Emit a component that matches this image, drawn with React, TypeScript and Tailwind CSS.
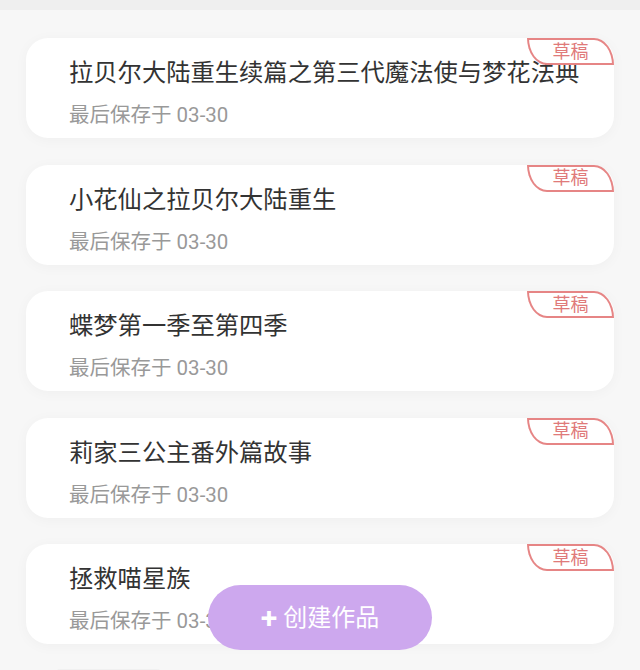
import React from "react";

const drafts = [
  "拉贝尔大陆重生续篇之第三代魔法使与梦花法典",
  "小花仙之拉贝尔大陆重生",
  "蝶梦第一季至第四季",
  "莉家三公主番外篇故事",
  "拯救喵星族",
];

const font = { fontFamily: "Roboto, 'Noto Sans CJK SC', sans-serif" };

const DraftCard = ({ title }: { title: string }) => (
  <div className="relative h-[100px] w-full rounded-[22px] bg-white pl-[43px] pt-[18px] shadow-[0_2px_14px_rgba(0,0,0,0.035)]">
    <div className="text-[24.3px] leading-[34px] text-[#333333] whitespace-nowrap">{title}</div>
    <div className="mt-[11px] text-[20.5px] leading-[28px] text-[#999999]">最后保存于 03-30</div>
    <div className="absolute right-0 top-0 flex h-[27px] w-[87px] items-center justify-center rounded-tr-[20px_27px] rounded-bl-[20px_27px] border-2 border-[#e68585] bg-white text-[18px] leading-none text-[#e07a7a]">
      草稿
    </div>
  </div>
);

export default function App() {
  return (
    <div className="relative h-[670px] w-full overflow-hidden bg-[#f7f7f7]" style={font}>
      <div className="h-[10px] w-full bg-[#efefef]" />
      <div className="flex flex-col gap-[26.5px] px-[26px] pt-[28px]">
        {drafts.map((t) => (
          <DraftCard key={t} title={t} />
        ))}
        <div className="ml-[30px] mt-[-2px] h-[20px] w-[105px] rounded-t-[4px] bg-[#f0f0f0]" />
      </div>
      <button className="absolute bottom-[20px] left-1/2 flex h-[65px] w-[224px] -translate-x-1/2 items-center justify-center gap-[6px] rounded-full bg-[#cda8ee] text-[24px] text-white">
        <span className="text-[30px] font-semibold leading-none">+</span>
        <span>创建作品</span>
      </button>
    </div>
  );
}
